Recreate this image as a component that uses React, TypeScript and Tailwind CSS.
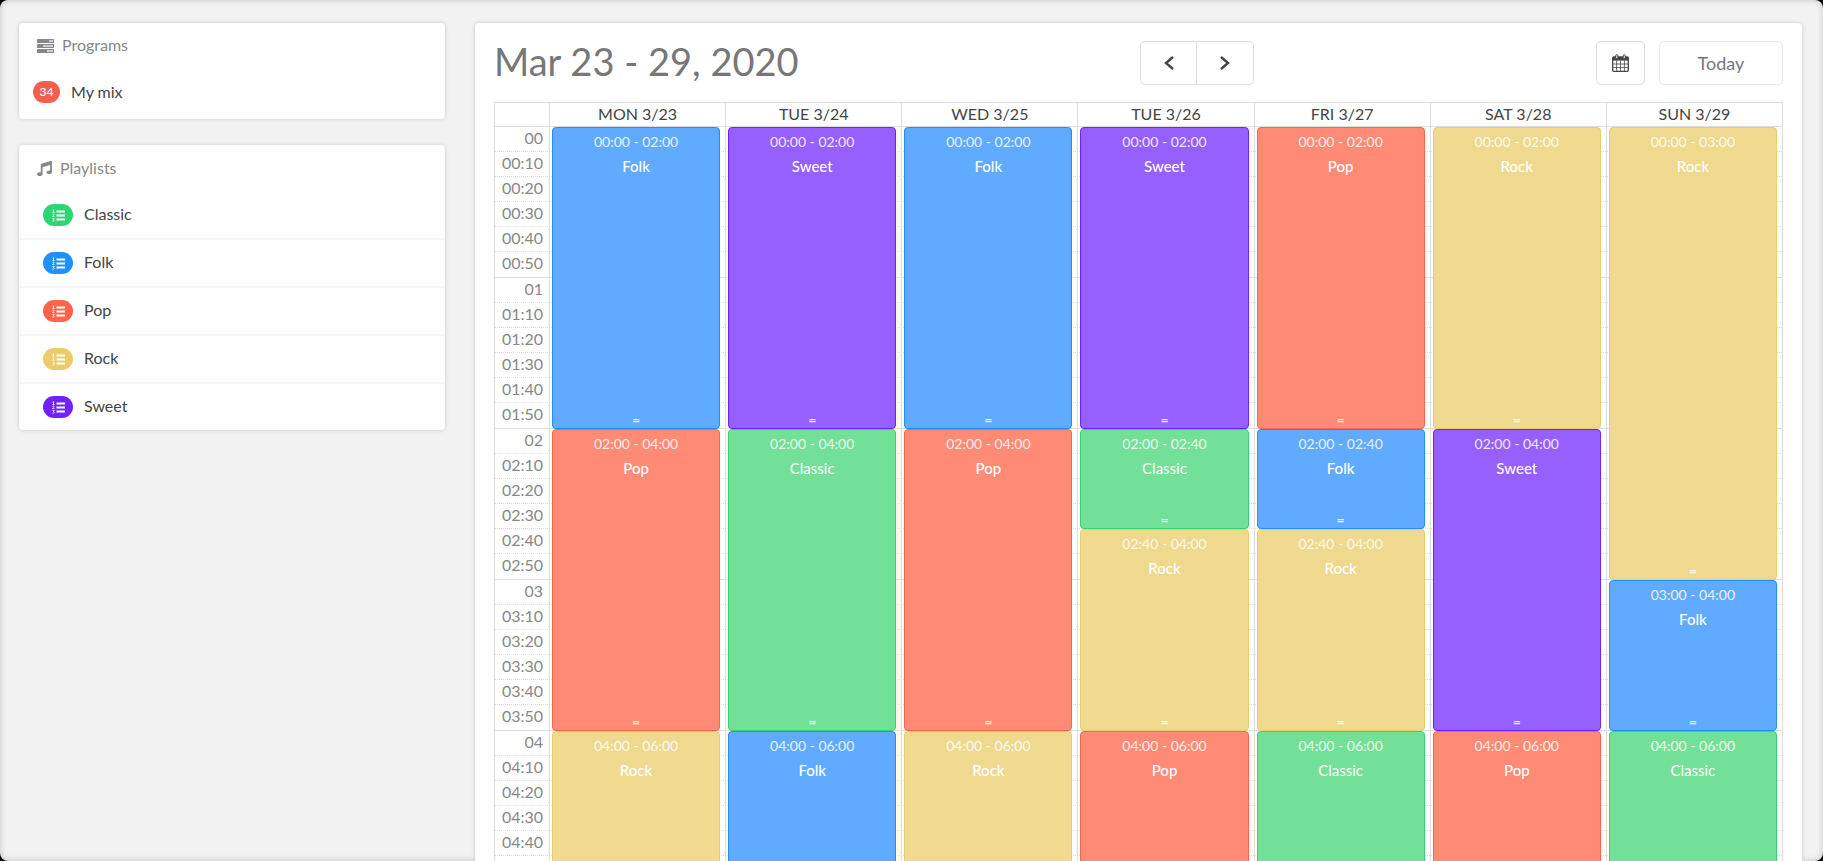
import { FaMusic } from "react-icons/fa";

const SLOTS = ["", ":10", ":20", ":30", ":40", ":50"];
const HOURS = ["00", "01", "02", "03", "04"];

const playlists = [
  { name: "Classic", badge: "bg-[#2ed573]" },
  { name: "Folk", badge: "bg-[#1e90ff]" },
  { name: "Pop", badge: "bg-[#ff6348]" },
  { name: "Rock", badge: "bg-[#eccc68]" },
  { name: "Sweet", badge: "bg-[#7120ff]" },
];

const eventColors: Record<string, string> = {
  Classic: "bg-[#73e097] border-[#2ed573]",
  Folk: "bg-[#60abff] border-[#1e90ff]",
  Pop: "bg-[#ff8a76] border-[#ff6348]",
  Rock: "bg-[#eed98f] border-[#eccc68]",
  Sweet: "bg-[#9560ff] border-[#7120ff]",
};

// event length in minutes -> height, one hour is 151px
const heights: Record<number, string> = {
  40: "h-[100px]",
  60: "h-[151px]",
  80: "h-[202px]",
  120: "h-[302px]",
  180: "h-[453px]",
};

type Event = { time: string; name: string; minutes: number };

const days: { label: string; today?: boolean; events: Event[] }[] = [
  {
    label: "MON 3/23",
    events: [
      { time: "00:00 - 02:00", name: "Folk", minutes: 120 },
      { time: "02:00 - 04:00", name: "Pop", minutes: 120 },
      { time: "04:00 - 06:00", name: "Rock", minutes: 120 },
    ],
  },
  {
    label: "TUE 3/24",
    today: true,
    events: [
      { time: "00:00 - 02:00", name: "Sweet", minutes: 120 },
      { time: "02:00 - 04:00", name: "Classic", minutes: 120 },
      { time: "04:00 - 06:00", name: "Folk", minutes: 120 },
    ],
  },
  {
    label: "WED 3/25",
    events: [
      { time: "00:00 - 02:00", name: "Folk", minutes: 120 },
      { time: "02:00 - 04:00", name: "Pop", minutes: 120 },
      { time: "04:00 - 06:00", name: "Rock", minutes: 120 },
    ],
  },
  {
    label: "TUE 3/26",
    events: [
      { time: "00:00 - 02:00", name: "Sweet", minutes: 120 },
      { time: "02:00 - 02:40", name: "Classic", minutes: 40 },
      { time: "02:40 - 04:00", name: "Rock", minutes: 80 },
      { time: "04:00 - 06:00", name: "Pop", minutes: 120 },
    ],
  },
  {
    label: "FRI 3/27",
    events: [
      { time: "00:00 - 02:00", name: "Pop", minutes: 120 },
      { time: "02:00 - 02:40", name: "Folk", minutes: 40 },
      { time: "02:40 - 04:00", name: "Rock", minutes: 80 },
      { time: "04:00 - 06:00", name: "Classic", minutes: 120 },
    ],
  },
  {
    label: "SAT 3/28",
    events: [
      { time: "00:00 - 02:00", name: "Rock", minutes: 120 },
      { time: "02:00 - 04:00", name: "Sweet", minutes: 120 },
      { time: "04:00 - 06:00", name: "Pop", minutes: 120 },
    ],
  },
  {
    label: "SUN 3/29",
    events: [
      { time: "00:00 - 03:00", name: "Rock", minutes: 180 },
      { time: "03:00 - 04:00", name: "Folk", minutes: 60 },
      { time: "04:00 - 06:00", name: "Classic", minutes: 120 },
    ],
  },
];

function TasksIcon() {
  return (
    <svg viewBox="0 0 17 14" className="h-[14px] w-[17px]" fill="currentColor" aria-hidden="true">
      <rect y="0" width="17" height="4" rx="0.6" />
      <rect y="5" width="17" height="4" rx="0.6" />
      <rect y="10" width="17" height="4" rx="0.6" />
      <g fill="#fff" fillOpacity="0.6">
        <rect x="12" y="1" width="4" height="2" />
        <rect x="6" y="6" width="10" height="2" />
        <rect x="10" y="11" width="6" height="2" />
      </g>
    </svg>
  );
}

function ListIcon() {
  return (
    <svg viewBox="0 0 13 13" className="h-[13px] w-[13px]" fill="none" stroke="#fff" aria-hidden="true">
      <path d="M4.5 2.5H13M4.5 6.5H13M4.5 10.5H13" strokeWidth="1.9" />
      <path
        d="M.6 1.2L1.5.6v2.8M.5 3.5h2M.5 5.3c1.6-.8 2.2.3 1 1.2L.5 7.7h2M.5 9.6h1.8L1.4 10.7c1.5 0 1.3 1.7-1 1.4"
        strokeWidth="0.8"
      />
    </svg>
  );
}

function CalendarIcon() {
  return (
    <svg viewBox="0 0 17 18" className="h-[18px] w-[17px]" fill="none" stroke="currentColor" aria-hidden="true">
      <path d="M1 3h15v3.6H1z" fill="currentColor" stroke="none" />
      <rect x="0.7" y="3" width="15.6" height="14.3" rx="1" strokeWidth="1.3" />
      <path d="M4.6 6.5v11M8.5 6.5v11M12.4 6.5v11M1 10h15M1 13.6h15" strokeWidth="0.8" />
      <rect x="3.8" y="0.7" width="2" height="4" rx="1" fill="#fff" strokeWidth="1" />
      <rect x="11.2" y="0.7" width="2" height="4" rx="1" fill="#fff" strokeWidth="1" />
    </svg>
  );
}

function Chevron({ flip = false }: { flip?: boolean }) {
  return (
    <svg viewBox="0 0 10 14" className="h-[14px] w-[10px]" fill="none" stroke="currentColor" strokeWidth="2.4" aria-hidden="true">
      <path d={flip ? "M1 1l7 6-7 6" : "M9 1L2 7l7 6"} />
    </svg>
  );
}

function EventBlock({ event }: { event: Event }) {
  return (
    <article
      className={`relative rounded-[4px] border pt-1 text-center text-white ${eventColors[event.name]} ${heights[event.minutes]}`}
    >
      <p className="text-sm leading-5 opacity-85">{event.time}</p>
      <h3 className={event.name === "Classic" ? "mt-0.5 text-[15px] leading-6" : "mt-0.5 text-[15px] leading-6 font-medium"}>
        {event.name}
      </h3>
      <span className="absolute inset-x-0 bottom-0.5 text-sm leading-3 font-bold opacity-80">=</span>
    </article>
  );
}

export default function App() {
  return (
    <div className="h-screen overflow-hidden bg-black font-['Lato',sans-serif] text-[#444]">
      <div className="flex h-full gap-[30px] overflow-hidden rounded-lg bg-[#f2f2f2] pt-[23px] pr-[21px] pl-[19px] shadow-[inset_0_0_6px_rgba(0,0,0,0.2)]">
        {/* SIDEBAR */}
        <aside className="w-[426px] shrink-0 space-y-[26px]">
          <section className="rounded-[4px] bg-white pb-4 shadow-[0_0_4px_rgba(0,0,0,0.16)]">
            <h2 className="flex h-[45px] items-center gap-2 pl-[18px] text-[#888]">
              <TasksIcon />
              <span className="pb-0.5">Programs</span>
            </h2>
            <a href="#my-mix" className="flex items-center gap-[11px] pt-[13px] pl-[14px] leading-[22px]">
              <span className="w-[27px] rounded-full bg-[#f55d4c] text-center text-xs leading-[22px] font-medium text-white">34</span>
              My mix
            </a>
          </section>

          <section className="rounded-[4px] bg-white shadow-[0_0_4px_rgba(0,0,0,0.16)]">
            <h2 className="flex h-[47px] items-center gap-2 pl-[18px] text-[#888]">
              <FaMusic className="size-[15px]" />
              <span className="pb-0.5">Playlists</span>
            </h2>
            <ul className="divide-y-2 divide-[#f5f5f5]">
              {playlists.map((playlist) => (
                <li key={playlist.name}>
                  <a href={`#${playlist.name}`} className="flex h-[46px] items-center gap-[11px] pl-6">
                    <span className={`flex h-[22px] w-[30px] items-center justify-center rounded-full ${playlist.badge}`}>
                      <ListIcon />
                    </span>
                    <span className="pb-0.5">{playlist.name}</span>
                  </a>
                </li>
              ))}
            </ul>
          </section>
        </aside>

        {/* CALENDAR */}
        <main className="min-w-0 flex-1 rounded-t-[4px] bg-white px-[19px] shadow-[0_0_4px_rgba(0,0,0,0.16)]">
          <header className="flex h-[79px] items-center justify-between">
            <h1 className="pb-1 text-[38px] leading-10 text-[#777]">Mar 23 - 29, 2020</h1>
            <div className="flex h-[44px] rounded-[5px] border border-[#ddd]">
              <button type="button" aria-label="Previous week" className="flex w-14 items-center justify-center border-r border-[#ddd]">
                <Chevron />
              </button>
              <button type="button" aria-label="Next week" className="flex w-14 items-center justify-center">
                <Chevron flip />
              </button>
            </div>
            <div className="flex h-[44px] gap-[14px]">
              <button type="button" aria-label="Pick a date" className="flex w-[49px] items-center justify-center rounded-[5px] border border-[#ddd]">
                <CalendarIcon />
              </button>
              <button type="button" className="w-[124px] rounded-[5px] border border-[#e8e8e8] text-lg text-[#777]">
                Today
              </button>
            </div>
          </header>

          <div className="grid grid-cols-[55px_repeat(7,minmax(0,1fr))] border-t border-r border-[#ddd]">
            <div className="border-b border-l border-[#ddd]" />
            {days.map((day) => (
              <div key={day.label} className="h-6 border-b border-l border-[#ddd] text-center leading-[22px]">
                {day.label}
              </div>
            ))}

            {/* slot lines run under the events */}
            <div className="col-span-8 col-start-1 row-start-2">
              {HOURS.map((hour) =>
                SLOTS.map((slot) => (
                  <div
                    key={hour + slot}
                    className={
                      slot === ":50"
                        ? "h-[26px] border-b border-l border-[#ddd]"
                        : "h-[25px] border-b border-l border-b-[#ddd] border-l-[#ddd] [border-bottom-style:dotted]"
                    }
                  >
                    <span className="block w-12 text-right leading-[22px] text-[#888]">{hour + slot}</span>
                  </div>
                )),
              )}
            </div>
            <div className="col-span-8 col-start-1 row-start-2 grid grid-cols-subgrid">
              <div />
              {days.map((day) => (
                <div
                  key={day.label}
                  className={`border-l border-[#ddd] pr-[5px] pl-[2px] ${day.today ? "bg-[#fcf0c8]/40" : ""}`}
                >
                  {day.events.map((event) => (
                    <EventBlock key={event.time} event={event} />
                  ))}
                </div>
              ))}
            </div>
          </div>
        </main>
      </div>
    </div>
  );
}
